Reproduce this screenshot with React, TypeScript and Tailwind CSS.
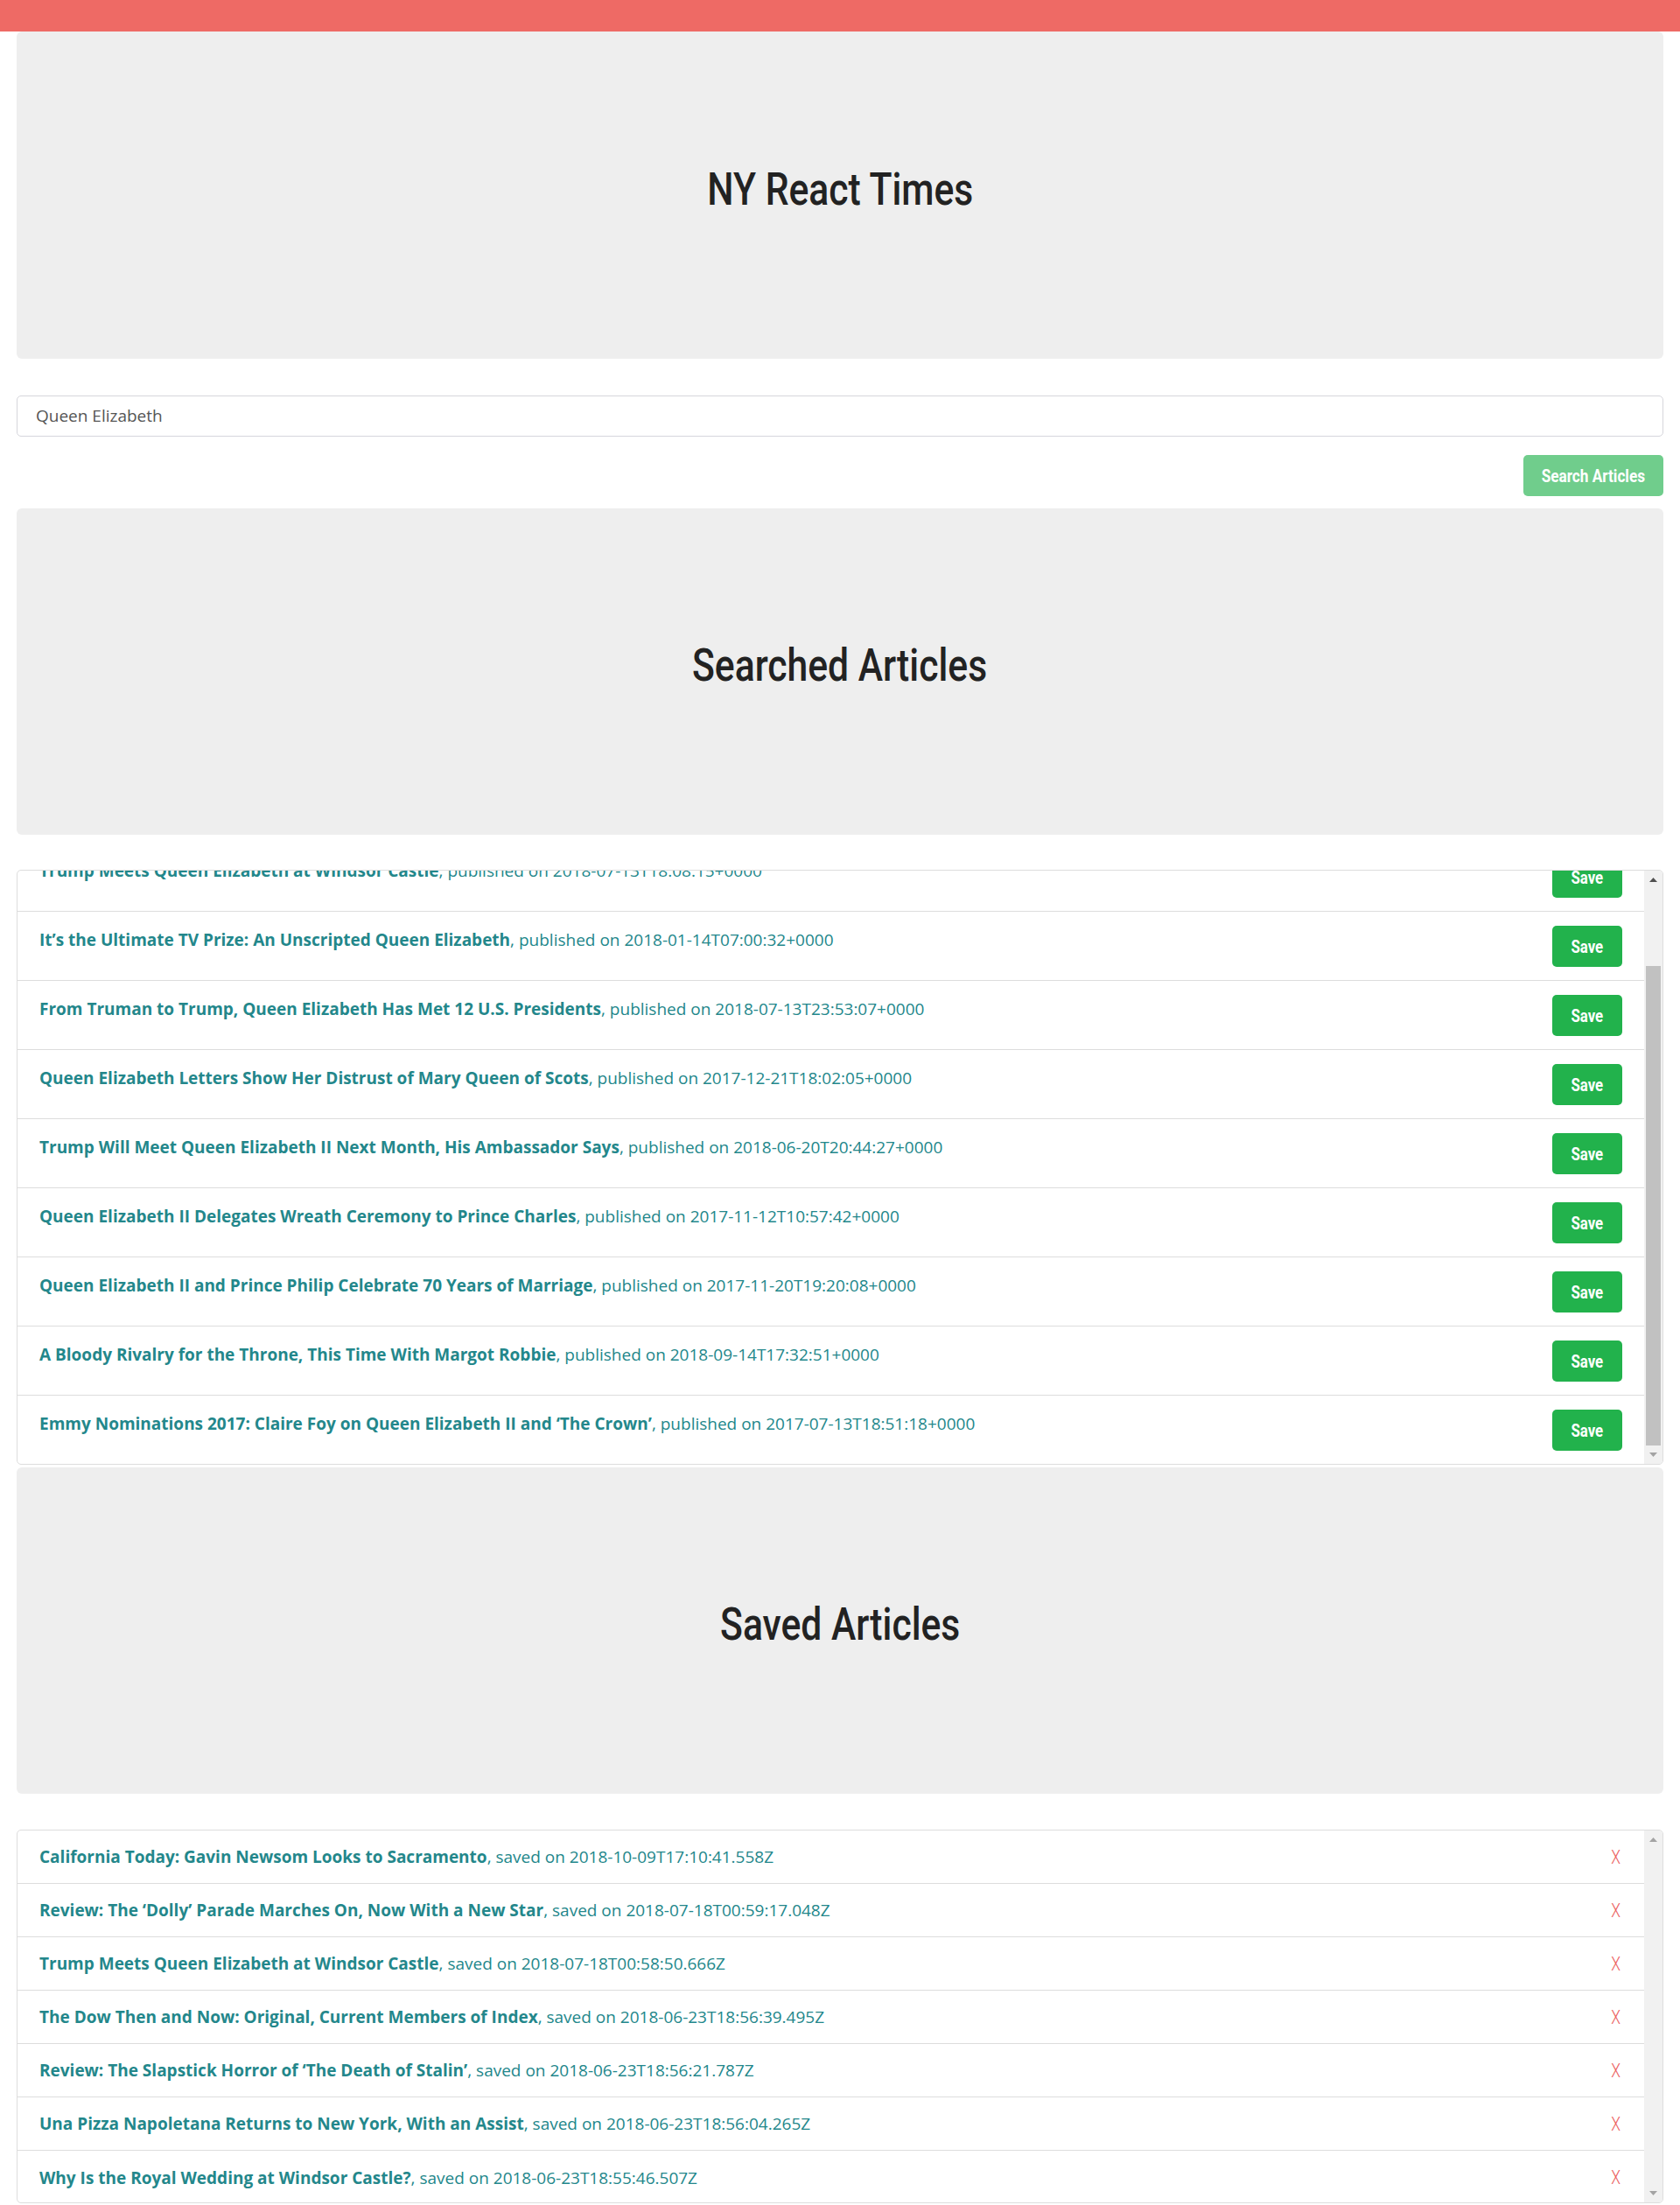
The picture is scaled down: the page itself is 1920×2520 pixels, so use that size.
import React, { useLayoutEffect, useRef } from "react";

const searched: [string, string][] = [
  ["Queen Elizabeth Through the Years", "2018-05-18T12:00:00+0000"],
  ["Trump Meets Queen Elizabeth at Windsor Castle", "2018-07-13T18:08:15+0000"],
  ["It’s the Ultimate TV Prize: An Unscripted Queen Elizabeth", "2018-01-14T07:00:32+0000"],
  ["From Truman to Trump, Queen Elizabeth Has Met 12 U.S. Presidents", "2018-07-13T23:53:07+0000"],
  ["Queen Elizabeth Letters Show Her Distrust of Mary Queen of Scots", "2017-12-21T18:02:05+0000"],
  ["Trump Will Meet Queen Elizabeth II Next Month, His Ambassador Says", "2018-06-20T20:44:27+0000"],
  ["Queen Elizabeth II Delegates Wreath Ceremony to Prince Charles", "2017-11-12T10:57:42+0000"],
  ["Queen Elizabeth II and Prince Philip Celebrate 70 Years of Marriage", "2017-11-20T19:20:08+0000"],
  ["A Bloody Rivalry for the Throne, This Time With Margot Robbie", "2018-09-14T17:32:51+0000"],
  ["Emmy Nominations 2017: Claire Foy on Queen Elizabeth II and ‘The Crown’", "2017-07-13T18:51:18+0000"],
];

const saved: [string, string][] = [
  ["California Today: Gavin Newsom Looks to Sacramento", "2018-10-09T17:10:41.558Z"],
  ["Review: The ‘Dolly’ Parade Marches On, Now With a New Star", "2018-07-18T00:59:17.048Z"],
  ["Trump Meets Queen Elizabeth at Windsor Castle", "2018-07-18T00:58:50.666Z"],
  ["The Dow Then and Now: Original, Current Members of Index", "2018-06-23T18:56:39.495Z"],
  ["Review: The Slapstick Horror of ‘The Death of Stalin’", "2018-06-23T18:56:21.787Z"],
  ["Una Pizza Napoletana Returns to New York, With an Assist", "2018-06-23T18:56:04.265Z"],
  ["Why Is the Royal Wedding at Windsor Castle?", "2018-06-23T18:55:46.507Z"],
];

function Heading({ title }: { title: string }) {
  return (
    <h1 className="inline-block origin-center scale-x-[0.82] font-['Roboto',sans-serif] text-[52px] font-medium leading-[60px] text-[#222222]">
      {title}
    </h1>
  );
}

function Jumbo({ title }: { title: string }) {
  return (
    <div className="flex h-[373px] items-center justify-center rounded-[6px] bg-[#eeeeee] pb-[13px]">
      <Heading title={title} />
    </div>
  );
}

function Arrow({ up, color }: { up: boolean; color: string }) {
  return (
    <div className="flex h-[21px] shrink-0 items-center justify-center">
      <svg width="9" height="5" viewBox="0 0 9 5">
        <path d={up ? "M0 5 L4.5 0 L9 5 Z" : "M0 0 L4.5 5 L9 0 Z"} fill={color} />
      </svg>
    </div>
  );
}

function ScrollBar({ withThumb }: { withThumb: boolean }) {
  return (
    <div className="flex w-[21px] shrink-0 flex-col bg-[#f1f1f1]">
      <Arrow up color={withThumb ? "#505050" : "#a3a3a3"} />
      <div className="flex flex-1 flex-col justify-end px-[2px]">
        {withThumb && <div className="h-[548px] bg-[#c1c1c1]" />}
      </div>
      <Arrow up={false} color="#a3a3a3" />
    </div>
  );
}

export default function App() {
  const ref = useRef<HTMLDivElement>(null);
  useLayoutEffect(() => {
    if (ref.current) ref.current.scrollTop = ref.current.scrollHeight;
  }, []);

  return (
    <div className="min-h-[2520px] bg-white font-['Open_Sans',sans-serif] text-[19px]">
      <div className="h-[36px] bg-[#ee6a65]" />
      <div className="px-[19px]">
        <div className="flex h-[374px] items-center justify-center rounded-[6px] bg-[#eeeeee] pb-[13px]">
          <Heading title="NY React Times" />
        </div>

        <div className="mt-[42px] flex h-[47px] items-center rounded-[5px] border border-[#d6d6dc] pl-[21px] text-[19px] text-[#555555]">
          Queen Elizabeth
        </div>

        <div className="mt-[21px] flex justify-end">
          <button className="flex h-[47px] w-[160px] items-center justify-center rounded-[5px] bg-[#70cd8c] text-white">
            <span className="inline-block scale-x-[0.86] font-['Roboto',sans-serif] text-[20px] font-bold">
              Search Articles
            </span>
          </button>
        </div>

        <div className="mt-[14px]">
          <Jumbo title="Searched Articles" />
        </div>

        <div className="mt-[40px] flex h-[680px] overflow-hidden rounded-[5px] border border-[#dddddd]">
          <div ref={ref} className="flex-1 overflow-y-scroll [scrollbar-width:none]">
            {searched.map(([t, d], i) => (
              <div
                key={i}
                className={`flex items-start justify-between pl-[25px] pr-[25px] pt-[16px] pb-[15px] ${
                  i < searched.length - 1 ? "border-b border-[#dddddd]" : ""
                }`}
              >
                <p className="mt-[1px] leading-[30px] text-[#23878b]">
                  <b className="font-bold">{t}</b>, published on {d}
                </p>
                <button className="flex h-[47px] w-[80px] shrink-0 items-center justify-center rounded-[5px] bg-[#22b24c] text-white">
                  <span className="inline-block scale-x-[0.84] font-['Roboto',sans-serif] text-[20px] font-bold">
                    Save
                  </span>
                </button>
              </div>
            ))}
          </div>
          <ScrollBar withThumb />
        </div>

        <div className="mt-[3px]">
          <Jumbo title="Saved Articles" />
        </div>

        <div className="mt-[41px] flex h-[427px] overflow-hidden rounded-[5px] border border-[#dddddd]">
          <div className="flex-1 overflow-y-scroll [scrollbar-width:none]">
            {saved.map(([t, d], i) => (
              <div
                key={i}
                className={`flex h-[61px] items-center justify-between pl-[25px] pr-[26px] ${
                  i < saved.length - 1 ? "border-b border-[#dddddd]" : ""
                }`}
              >
                <p className="leading-[30px] text-[#23878b]">
                  <b className="font-bold">{t}</b>, saved on {d}
                </p>
                <span className="inline-block scale-x-[0.8] font-['Roboto',sans-serif] text-[22px] font-light text-[#ec5f5f]">
                  X
                </span>
              </div>
            ))}
          </div>
          <ScrollBar withThumb={false} />
        </div>
      </div>
    </div>
  );
}
